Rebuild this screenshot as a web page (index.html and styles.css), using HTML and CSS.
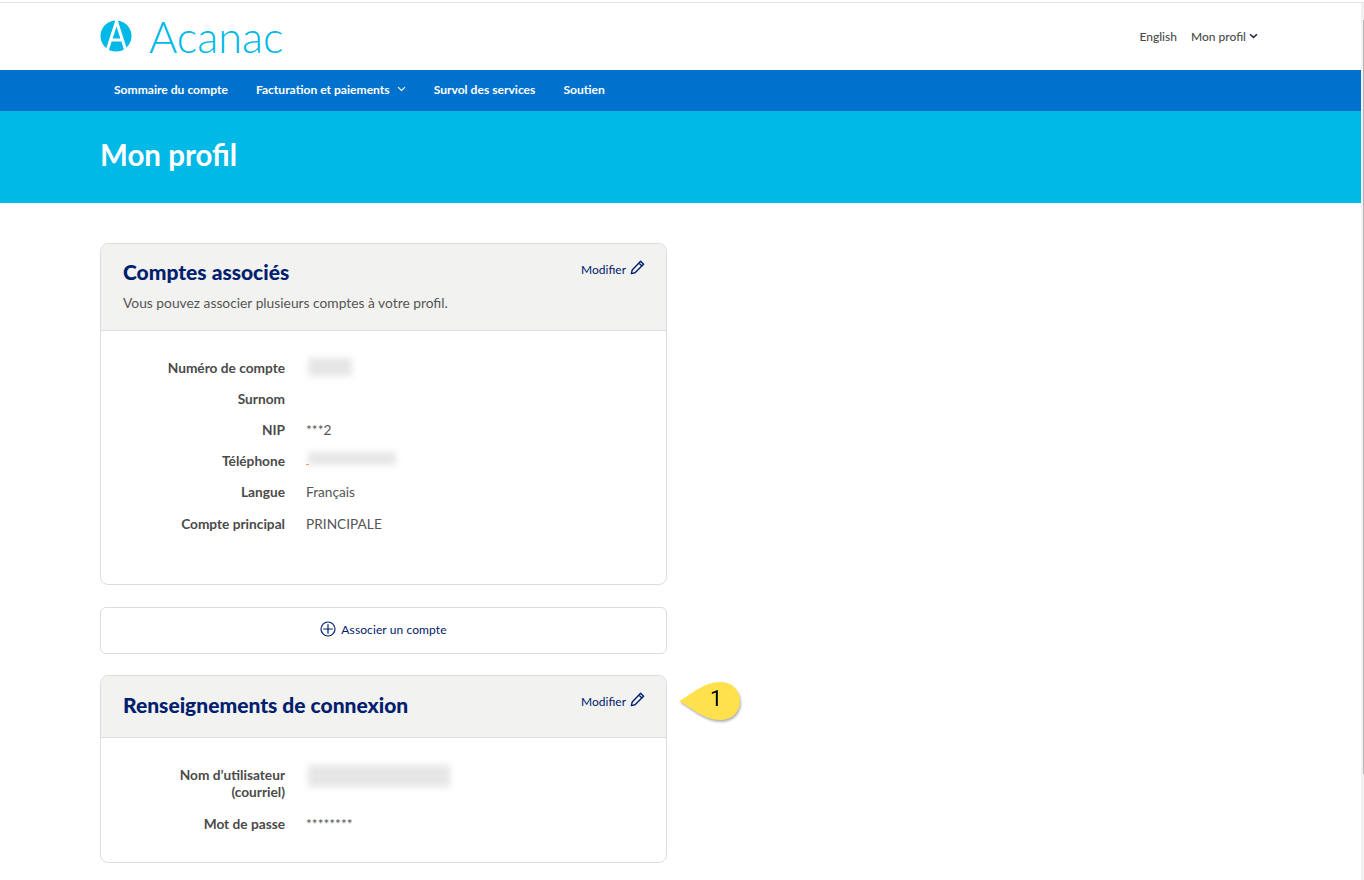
FILE: index.html
```html
<!DOCTYPE html>
<html lang="fr">
<head>
    <meta charset="UTF-8">
    <title>Mon profil - Acanac</title>
    <link rel="stylesheet" href="styles.css">
</head>
<body>
    <div class="page">
        <header class="top-bar">
            <div class="logo">
                <svg class="logo-mark" width="32" height="32" viewBox="0 0 32 32">
                    <circle cx="16" cy="16" r="15.5" fill="#00b9e6"/>
                    <path d="M7 31 L16.5 1.5 L26 31 M11 20 H22" fill="none" stroke="#fff" stroke-width="3"/>
                </svg>
                <span class="logo-text">Acanac</span>
            </div>
            <div class="top-links">
                <a href="#">English</a>
                <a href="#">Mon profil
                    <svg class="chevron" width="9" height="6" viewBox="0 0 9 6"><path d="M1 1.2 L4.5 4.4 L8 1.2" fill="none" stroke="#1f2a44" stroke-width="1.5"/></svg>
                </a>
            </div>
        </header>

        <nav class="main-nav">
            <a href="#">Sommaire du compte</a>
            <a href="#">Facturation et paiements
                <svg class="chevron nav-chevron" width="9" height="6" viewBox="0 0 9 6"><path d="M1 1.2 L4.5 4.4 L8 1.2" fill="none" stroke="#fff" stroke-width="1.1"/></svg>
            </a>
            <a href="#">Survol des services</a>
            <a href="#">Soutien</a>
        </nav>

        <div class="hero">
            <h1>Mon profil</h1>
        </div>

        <main class="content">
            <section class="card card-accounts">
                <div class="card-head">
                    <div>
                        <h2>Comptes associés</h2>
                        <p>Vous pouvez associer plusieurs comptes à votre profil.</p>
                    </div>
                    <a class="edit" href="#">Modifier
                        <svg width="15" height="15" viewBox="0 0 15 15"><path d="M10.6 1.2 L13.6 4.2 L5 12.8 L1.4 13.6 L2.2 10 Z M8.9 2.9 L11.9 5.9" fill="none" stroke="#00206e" stroke-width="1.4" stroke-linejoin="round"/></svg>
                    </a>
                </div>
                <dl class="fields">
                    <div class="row"><dt>Numéro de compte</dt><dd><span class="blurred blur-account"></span></dd></div>
                    <div class="row"><dt>Surnom</dt><dd></dd></div>
                    <div class="row"><dt>NIP</dt><dd>***2</dd></div>
                    <div class="row"><dt>Téléphone</dt><dd class="phone"><span class="blurred blur-phone"></span><span class="phone-dot"></span></dd></div>
                    <div class="row"><dt>Langue</dt><dd>Français</dd></div>
                    <div class="row"><dt>Compte principal</dt><dd>PRINCIPALE</dd></div>
                </dl>
            </section>

            <a class="add-account" href="#">
                <svg width="16" height="16" viewBox="0 0 16 16"><circle cx="8" cy="8" r="7" fill="none" stroke="#00206e" stroke-width="1.2"/><path d="M8 3.2 V12.8 M3.2 8 H12.8" stroke="#00206e" stroke-width="1.2"/></svg>
                Associer un compte
            </a>

            <section class="card card-login">
                <div class="card-head">
                    <h2>Renseignements de connexion</h2>
                    <a class="edit" href="#">Modifier
                        <svg width="15" height="15" viewBox="0 0 15 15"><path d="M10.6 1.2 L13.6 4.2 L5 12.8 L1.4 13.6 L2.2 10 Z M8.9 2.9 L11.9 5.9" fill="none" stroke="#00206e" stroke-width="1.4" stroke-linejoin="round"/></svg>
                    </a>
                </div>
                <dl class="fields">
                    <div class="row row-tall"><dt>Nom d’utilisateur<br>(courriel)</dt><dd><span class="blurred blur-user"></span></dd></div>
                    <div class="row"><dt>Mot de passe</dt><dd>********</dd></div>
                </dl>
                <div class="callout">
                    <svg width="66" height="44" viewBox="0 0 66 44"><path d="M1 22 C14 15 26 3 42 3 C54 3 62 11 62 22 C62 33 54 41 42 41 C26 41 14 29 1 22 Z" fill="#ffe14d"/></svg>
                    <span>1</span>
                </div>
            </section>
        </main>

        <div class="scrollbar"><div class="scroll-thumb"></div></div>
    </div>
</body>
</html>
```

FILE: styles.css
```css
* {
    margin: 0;
    padding: 0;
    box-sizing: border-box;
}

html, body {
    height: 880px;
    overflow: hidden;
}

body {
    font-family: 'Lato', sans-serif;
    font-size: 13.7px;
    color: #4a4a4a;
    background-color: white;
}

a {
    text-decoration: none;
    color: inherit;
}

.page {
    position: relative;
    height: 880px;
    padding-top: 3px;
    overflow: hidden;
    background: linear-gradient(#fff 2px, #e2e2e2 2px, #e2e2e2 3px, #fff 3px);
}

.top-bar {
    display: flex;
    justify-content: space-between;
    align-items: center;
    height: 67px;
    margin-right: 3px;
    padding: 0 103px 0 100px;
}

.logo {
    display: flex;
    align-items: center;
    gap: 17px;
}

.logo-text {
    font-size: 43.3px;
    font-weight: 300;
    color: #00b9e6;
    line-height: 1;
}

.top-links {
    display: flex;
    gap: 14px;
    padding-bottom: 1px;
    font-size: 12px;
    font-weight: 500;
}

.main-nav {
    display: flex;
    gap: 28px;
    align-items: center;
    height: 41px;
    margin-right: 3px;
    padding: 0 0 2px 114px;
    background-color: #0072ce;
    color: white;
    font-size: 12.1px;
    font-weight: 700;
}

.chevron {
    vertical-align: 2px;
}

.nav-chevron {
    margin-left: 4px;
}

.hero {
    display: flex;
    align-items: center;
    height: 92px;
    margin-right: 3px;
    padding: 0 0 6px 100px;
    background-color: #00b9e6;
}

.hero h1 {
    color: white;
    font-size: 29.5px;
    font-weight: 700;
}

.content {
    width: 567px;
    margin: 40px 0 0 100px;
}

.card {
    position: relative;
    border: 1px solid #dddddb;
    border-radius: 8px;
    background-color: white;
}

.card-accounts {
    height: 342px;
}

.card-login {
    height: 188px;
}

.card-head {
    display: flex;
    justify-content: space-between;
    align-items: flex-start;
    padding: 15px 21px 0 22px;
    background-color: #f2f2f0;
    border-bottom: 1px solid #dddddb;
    border-radius: 7px 7px 0 0;
}

.card-accounts .card-head {
    height: 87px;
}

.card-login .card-head {
    height: 62px;
}

.card-head h2 {
    font-size: 21px;
    font-weight: 900;
    color: #00206e;
    line-height: 26px;
}

.card-login h2 {
    margin-top: 1px;
}

.card-head p {
    margin-top: 9px;
    font-size: 13.8px;
    color: #555;
}

.edit {
    display: flex;
    align-items: center;
    gap: 4px;
    margin-top: 3px;
    font-size: 12px;
    color: #00206e;
}

.edit svg {
    margin-top: -4px;
}

.fields {
    padding-top: 20.6px;
}

.row {
    display: flex;
    gap: 21px;
    min-height: 31.2px;
    line-height: 31.2px;
}

.row dt {
    width: 184px;
    text-align: right;
    font-weight: 700;
    color: #4a4a4a;
}

.row dd {
    flex: 1;
    color: #555;
}

.row-tall {
    margin-bottom: 8px;
}

.row-tall dt {
    line-height: 17px;
    margin-top: 7px;
}

.blurred {
    display: block;
    height: 18px;
    background-color: #e6e6e6;
    filter: blur(3px);
}

.blur-account {
    width: 44px;
    margin: 6px 0 0 2px;
}

.phone {
    position: relative;
}

.blur-phone {
    width: 88px;
    height: 13px;
    margin: 7px 0 0 2px;
}

.phone-dot {
    position: absolute;
    top: 19px;
    left: 0;
    width: 3px;
    height: 1px;
    background-color: #e8a050;
}

.blur-user {
    width: 142px;
    height: 22px;
    margin: 6px 0 0 2px;
}

.add-account {
    display: flex;
    justify-content: center;
    align-items: center;
    gap: 5px;
    height: 47px;
    margin: 22px 0 21px;
    padding-bottom: 3px;
    border: 1px solid #dddddb;
    border-radius: 6px;
    font-size: 12px;
    letter-spacing: 0.1px;
    color: #00206e;
}

.callout {
    position: absolute;
    top: 3px;
    left: 577px;
    width: 66px;
    height: 44px;
    filter: drop-shadow(1px 2px 1px rgba(0,0,0,0.3));
}

.callout span {
    position: absolute;
    top: 8px;
    left: 32px;
    font-family: 'Roboto', sans-serif;
    font-size: 22px;
    line-height: 24px;
    color: black;
}

.scrollbar {
    position: absolute;
    top: 3px;
    right: 0;
    bottom: 0;
    width: 3px;
    background-color: #f1f1f1;
}

.scroll-thumb {
    width: 1px;
    height: 754px;
    margin: 17px 0 0 2px;
    background-color: #b5b5b5;
}
```
